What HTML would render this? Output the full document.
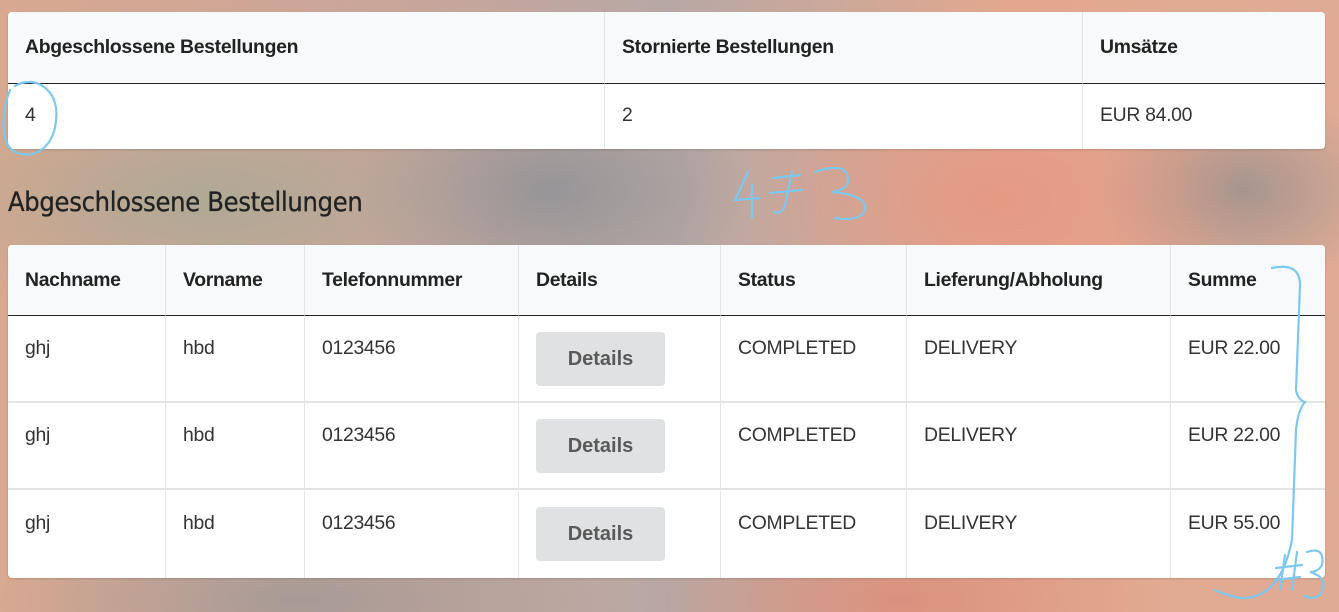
<!DOCTYPE html><html><head><style>
body{margin:0;width:1339px;height:612px;overflow:hidden;position:relative;font-family:"Liberation Sans",sans-serif;
background:
radial-gradient(ellipse 300px 120px at 200px 200px,rgba(160,170,150,.7),transparent),
radial-gradient(ellipse 250px 150px at 1000px 200px,rgba(230,150,130,.8),transparent),
radial-gradient(ellipse 200px 120px at 550px 190px,rgba(140,145,150,.8),transparent),
radial-gradient(ellipse 150px 100px at 1240px 190px,rgba(140,140,140,.7),transparent),
radial-gradient(ellipse 300px 100px at 300px 600px,rgba(150,150,150,.7),transparent),
radial-gradient(ellipse 250px 100px at 900px 600px,rgba(220,140,120,.8),transparent),
linear-gradient(90deg,#d8a890,#c9a59a 30%,#b7a8a5 50%,#e2a88e 75%,#e0ab95);}
.t{position:absolute;left:8px;width:1317px;background:#fff;border-radius:4px;overflow:hidden;box-shadow:0 1px 2px rgba(0,0,0,.15)}
.c{position:absolute;box-sizing:border-box;padding-left:17px;font-size:19.4px;color:#333;border-left:1px solid #e4e4e4;letter-spacing:-.3px}
.h{background:#f8f9fa;font-weight:bold;color:#222;border-bottom:1px solid #222}
.btn{position:absolute;left:17px;width:129px;height:54px;background:#e0e1e2;border-radius:4px;color:#5a5a5a;font-weight:bold;font-size:20px;line-height:54px;text-align:center;letter-spacing:0}
h2{position:absolute;left:8px;top:187px;margin:0;font-weight:normal;font-size:27px;color:#222;font-family:"DejaVu Sans Condensed","Liberation Sans",sans-serif;letter-spacing:-.3px;-webkit-text-stroke:.3px #222}
</style></head><body>
<div class="t" style="top:12px;height:137px">
<div class="c h" style="left:0;top:0;width:596px;height:72px;line-height:70px;border-left:0">Abgeschlossene Bestellungen</div>
<div class="c h" style="left:596px;top:0;width:478px;height:72px;line-height:70px">Stornierte Bestellungen</div>
<div class="c h" style="left:1074px;top:0;width:243px;height:72px;line-height:70px">Umsätze</div>
<div class="c" style="left:0;top:72px;width:596px;height:65px;line-height:62px;border-left:0">4</div>
<div class="c" style="left:596px;top:72px;width:478px;height:65px;line-height:62px">2</div>
<div class="c" style="left:1074px;top:72px;width:243px;height:65px;line-height:62px">EUR 84.00</div>
</div>
<h2>Abgeschlossene Bestellungen</h2>
<div class="t" style="top:245px;height:333px">
<div class="c h" style="left:0;top:0;width:157px;height:71px;line-height:70px;border-left:0">Nachname</div>
<div class="c h" style="left:157px;top:0;width:139px;height:71px;line-height:70px">Vorname</div>
<div class="c h" style="left:296px;top:0;width:214px;height:71px;line-height:70px">Telefonnummer</div>
<div class="c h" style="left:510px;top:0;width:202px;height:71px;line-height:70px">Details</div>
<div class="c h" style="left:712px;top:0;width:186px;height:71px;line-height:70px">Status</div>
<div class="c h" style="left:898px;top:0;width:264px;height:71px;line-height:70px">Lieferung/Abholung</div>
<div class="c h" style="left:1162px;top:0;width:155px;height:71px;line-height:70px">Summe</div>
</div>
<div id="rows"></div>
<script>
var ys=[316,403,491],sums=["EUR 22.00","EUR 22.00","EUR 55.00"],h="";
var cols=[[0,157,"ghj"],[157,139,"hbd"],[296,214,"0123456"],[510,202,""],[712,186,"COMPLETED"],[898,264,"DELIVERY"],[1162,155,""]];
ys.forEach(function(y,i){cols.forEach(function(c,j){var txt=j==6?sums[i]:c[2];
h+='<div class="c" style="left:'+(8+c[0])+'px;top:'+y+'px;width:'+c[1]+'px;height:87px;padding-top:21px;'+(j==0?'border-left:0;':'')+(i<2?'border-bottom:2px solid #e4e4e4;':'')+'">'+txt+(j==3?'<div class="btn" style="top:16px">Details</div>':'')+'</div>';});});
document.getElementById("rows").innerHTML=h;
</script>
<svg style="position:absolute;left:0;top:0" width="1339" height="612" fill="none" stroke="#7cc8ef" stroke-width="2.2" stroke-linecap="round">
<path d="M15 86 C35 74 60 90 56 120 C54 150 30 162 12 150 C0 140 2 110 10 90"/>
<path d="M748 172 L735 200 L760 198 M752 185 L752 218"/>
<path d="M773 178 L800 175 M770 193 L802 190 M792 172 L785 205 Q782 215 774 212"/>
<path d="M815 172 Q850 160 848 183 Q845 190 832 192 Q868 195 865 210 Q860 222 835 218"/>
<path d="M1272 268 Q1300 262 1300 285 L1296 390 Q1298 400 1305 402 Q1298 410 1296 430 L1292 540 Q1280 600 1240 598 Q1222 594 1215 590"/>
<path d="M1285 555 L1280 590 M1297 552 L1292 590 M1276 568 L1302 565 M1275 580 L1300 577 M1307 552 Q1325 546 1322 565 Q1318 572 1310 572 Q1330 578 1320 595 Q1312 600 1305 596"/>
</svg>
</body></html>
